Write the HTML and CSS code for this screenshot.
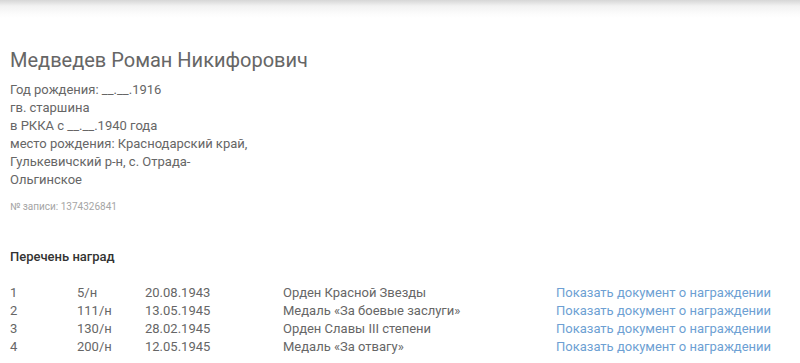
FILE: index.html
```html
<!DOCTYPE html>
<html lang="ru">
<head>
    <meta charset="UTF-8">
    <title>Медведев Роман Никифорович</title>
    <link rel="stylesheet" href="styles.css">
</head>
<body>
    <div class="topbar"></div>
    <div class="container">
        <h1>Медведев Роман Никифорович</h1>
        <div class="info">
            <p>Год рождения: __.__.1916</p>
            <p>гв. старшина</p>
            <p>в РККА с __.__.1940 года</p>
            <p>место рождения: Краснодарский край,<br>Гулькевичский р-н, с. Отрада-<br>Ольгинское</p>
        </div>
        <p class="record">№ записи: 1374326841</p>

        <h2>Перечень наград</h2>
        <table class="awards">
            <tr>
                <td class="c-num">1</td>
                <td class="c-no">5/н</td>
                <td class="c-date">20.08.1943</td>
                <td class="c-name">Орден Красной Звезды</td>
                <td><a href="#">Показать документ о награждении</a></td>
            </tr>
            <tr>
                <td class="c-num">2</td>
                <td class="c-no">111/н</td>
                <td class="c-date">13.05.1945</td>
                <td class="c-name">Медаль «За боевые заслуги»</td>
                <td><a href="#">Показать документ о награждении</a></td>
            </tr>
            <tr>
                <td class="c-num">3</td>
                <td class="c-no">130/н</td>
                <td class="c-date">28.02.1945</td>
                <td class="c-name">Орден Славы III степени</td>
                <td><a href="#">Показать документ о награждении</a></td>
            </tr>
            <tr>
                <td class="c-num">4</td>
                <td class="c-no">200/н</td>
                <td class="c-date">12.05.1945</td>
                <td class="c-name">Медаль «За отвагу»</td>
                <td><a href="#">Показать документ о награждении</a></td>
            </tr>
        </table>
    </div>
</body>
</html>
```

FILE: styles.css
```css
body {
    margin: 0;
    font-family: Roboto, "Liberation Sans", sans-serif;
    background-color: #fff;
    color: #666;
}
.topbar {
    height: 18px;
    background: linear-gradient(to bottom, #d6d6d6 0px, #f2f2f2 6px, #fcfcfc 14px, #fff 18px);
}
.container {
    padding: 0 10px;
}
h1 {
    margin: 27px 0 0;
    font-size: 20px;
    font-weight: 400;
    line-height: 30px;
    color: #666;
}
.info {
    margin-top: 6px;
    font-size: 13px;
    line-height: 18px;
}
.info p {
    margin: 0;
}
.record {
    margin: 12px 0 0;
    font-size: 10px;
    color: #a5a5a5;
}
h2 {
    margin: 37px 0 0;
    font-size: 13px;
    font-weight: 500;
    color: #333;
}
.awards {
    margin-top: 20px;
    border-collapse: collapse;
    font-size: 13px;
}
.awards td {
    padding: 0;
    height: 18px;
    line-height: 18px;
    vertical-align: middle;
}
.c-num {
    width: 67px;
}
.c-no {
    width: 68px;
}
.c-date {
    width: 138px;
}
.c-name {
    width: 273px;
}
.awards a {
    color: #6d9fd3;
    text-decoration: none;
}
```
